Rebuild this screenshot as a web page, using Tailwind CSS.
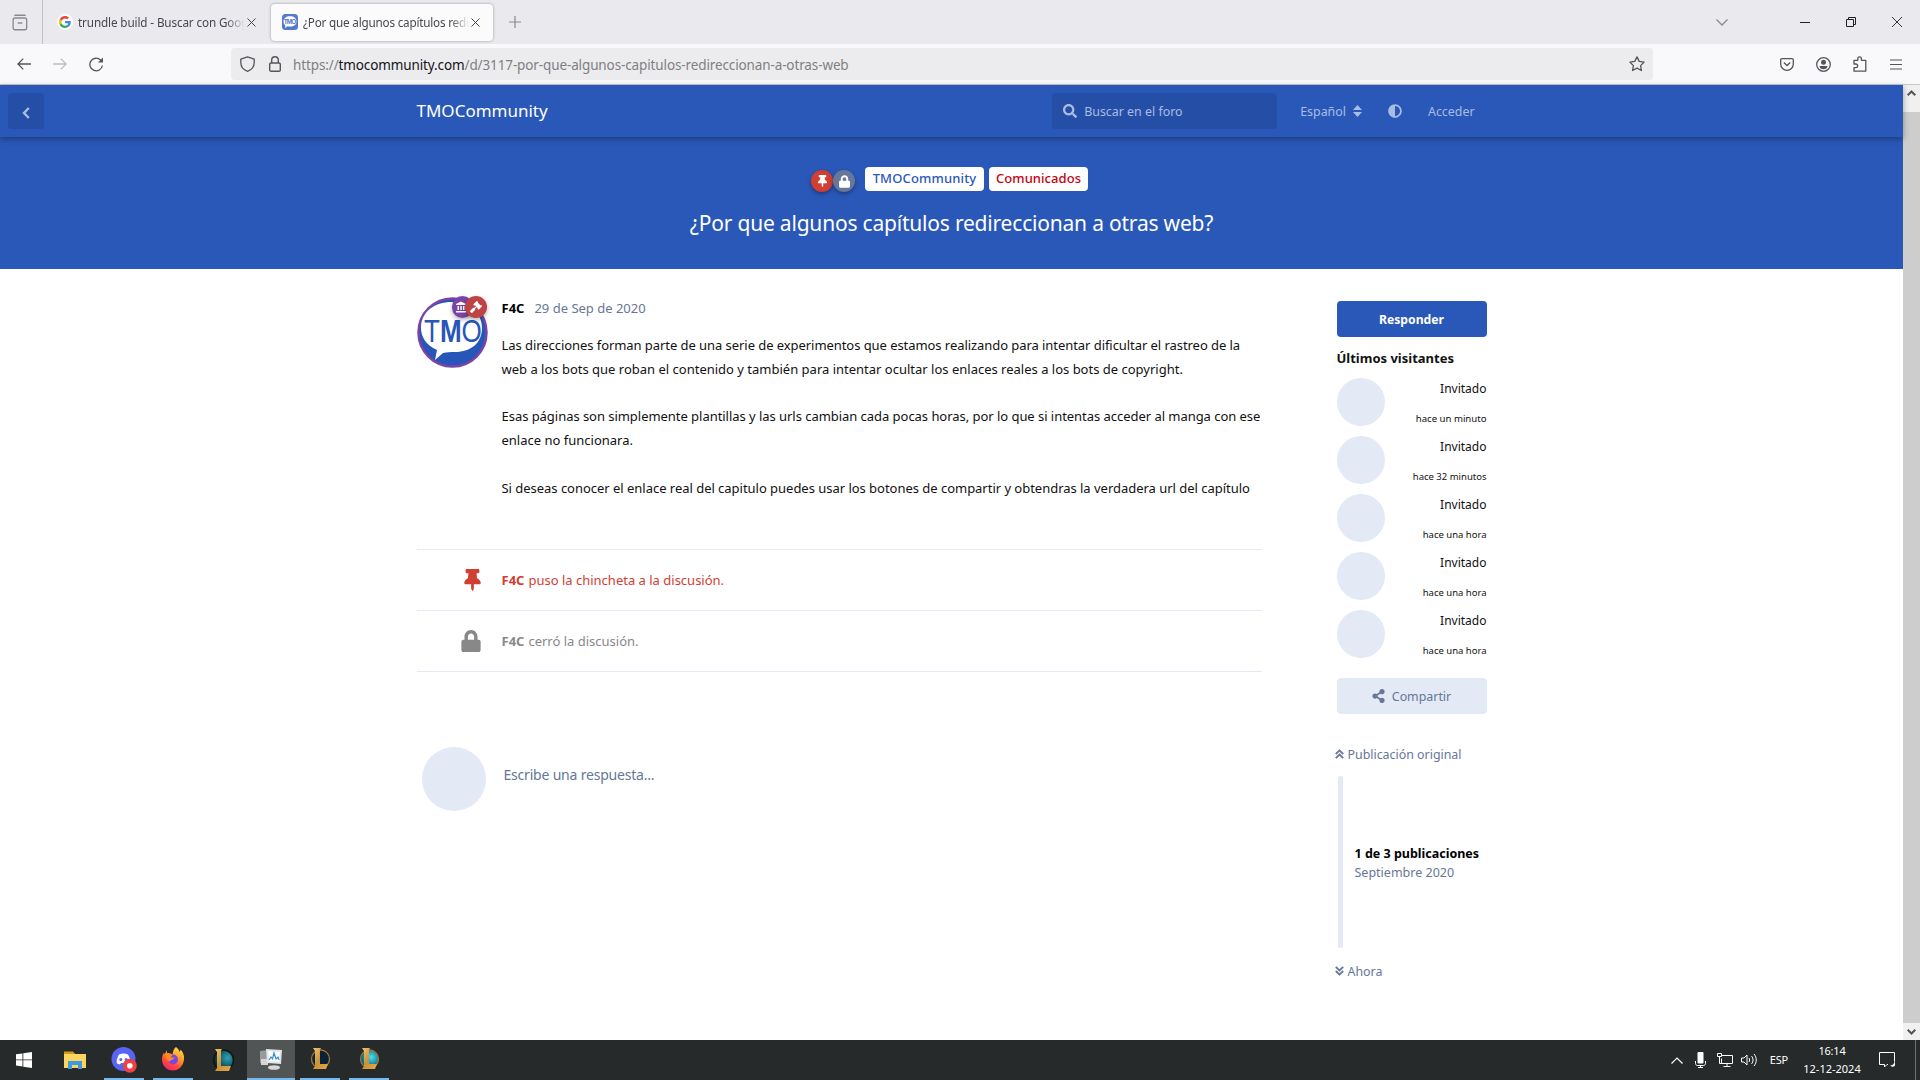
<!DOCTYPE html>
<html lang="es">
<head>
<meta charset="utf-8">
<title>¿Por que algunos capítulos redireccionan a otras web? - TMOCommunity</title>
<script src="https://cdn.jsdelivr.net/npm/@tailwindcss/browser@4"></script>
</head>
<body class="w-[1920px] h-[1080px] overflow-hidden bg-white font-['Noto_Sans',sans-serif] text-[13px] text-[#111] flex flex-col whitespace-nowrap">

<svg class="absolute w-0 h-0">
  <defs>
    <symbol id="pin" viewBox="0 0 384 512"><path fill="currentColor" d="M298.028 214.267L285.793 96H328c13.255 0 24-10.745 24-24V24c0-13.255-10.745-24-24-24H56C42.745 0 32 10.745 32 24v48c0 13.255 10.745 24 24 24h42.207L85.972 214.267C37.465 236.82 0 277.261 0 328c0 13.255 10.745 24 24 24h136v104.007c0 1.242.289 2.467.845 3.578l24 48c2.941 5.882 11.364 5.893 14.311 0l24-48a8.008 8.008 0 0 0 .845-3.578V352h136c13.255 0 24-10.745 24-24-.001-51.183-37.983-91.42-85.973-113.733z"/></symbol>
    <symbol id="lock" viewBox="0 0 448 512"><path fill="currentColor" d="M400 224h-24v-72C376 68.2 307.8 0 224 0S72 68.2 72 152v72H48c-26.5 0-48 21.5-48 48v192c0 26.5 21.5 48 48 48h352c26.5 0 48-21.5 48-48V272c0-26.5-21.5-48-48-48zm-104 0H152v-72c0-39.7 32.3-72 72-72s72 32.3 72 72v72z"/></symbol>
    <linearGradient id="gold" x1="0" y1="0" x2="1" y2="1"><stop offset="0" stop-color="#f3c56b"/><stop offset=".5" stop-color="#c8923b"/><stop offset="1" stop-color="#e9a945"/></linearGradient>
    <radialGradient id="teal" cx=".7" cy=".4" r=".7"><stop offset="0" stop-color="#2fa3b5"/><stop offset=".6" stop-color="#0e5a6b"/><stop offset="1" stop-color="#06202c"/></radialGradient>
    <radialGradient id="cyan" cx=".6" cy=".4" r=".7"><stop offset="0" stop-color="#4fe0ea"/><stop offset=".6" stop-color="#1583a8"/><stop offset="1" stop-color="#0a3a58"/></radialGradient>
    <linearGradient id="fox" x1=".8" y1="0" x2=".3" y2="1"><stop offset="0" stop-color="#ffe14a"/><stop offset=".45" stop-color="#ff9226"/><stop offset=".75" stop-color="#ff4440"/><stop offset="1" stop-color="#f0267a"/></linearGradient>
  </defs>
</svg>

<!-- Tab strip -->
<div class="h-[44px] shrink-0 bg-[#eae9ee] flex items-center text-[#48474f] text-[11.7px]">
  <div class="w-[43px] h-full border-r border-[#c0bfc6] flex items-center pl-[12px]">
    <svg class="w-[16px] h-[17px]" viewBox="0 0 17 17" preserveAspectRatio="none" fill="none" stroke="#8a898f" stroke-width="1.4"><path d="M3 1.2h11" stroke-linecap="round"/><rect x="1.2" y="4" width="14.4" height="11.8" rx="2"/><path d="M6 9h5"/></svg>
  </div>
  <div class="w-[228px] h-full flex items-center pl-[14px]">
    <div class="w-4 h-4 rounded-full bg-white flex items-center justify-center">
      <svg class="w-3 h-3" viewBox="0 0 48 48"><path fill="#ea4335" d="M24 9.5c3.5 0 6.700 1.200 9.200 3.600l6.900-6.900C35.900 2.400 30.500 0 24 0 14.600 0 6.500 5.400 2.600 13.200l8 6.200C12.400 13.700 17.700 9.500 24 9.500z"/><path fill="#4285f4" d="M47 24.500c0-1.600-.2-3.100-.4-4.500H24v9h12.900c-.6 3-2.200 5.500-4.700 7.200l7.700 6C44.400 38 47 31.800 47 24.500z"/><path fill="#fbbc05" d="M10.500 28.600a14.500 14.500 0 0 1 0-9.200l-8-6.200a24 24 0 0 0 0 21.600l8-6.200z"/><path fill="#34a853" d="M24 48c6.500 0 11.900-2.100 15.900-5.800l-7.700-6c-2.200 1.500-4.900 2.300-8.200 2.300-6.300 0-11.600-4.200-13.500-9.900l-8 6.200C6.500 42.600 14.600 48 24 48z"/></svg>
    </div>
    <div class="ml-[5px] mt-[2px] w-[168px] overflow-hidden tracking-[-0.12px] [mask-image:linear-gradient(to_right,#000_148px,transparent_167px)]">trundle build - Buscar con Google</div>
    <svg class="w-[9px] h-[9px] ml-[1px]" viewBox="0 0 9 9" stroke="#48474f" stroke-width="1"><path d="M.5.5l8 8M8.500.5l-8 8"/></svg>
  </div>
  <div class="w-[222px] h-[37px] rounded-[4px] bg-[#fbfbfb] shadow-[0_0_3px_rgba(0,0,0,0.35)] flex items-center pl-[11px]">
    <svg class="w-4 h-4" viewBox="0 0 16 16"><rect width="16" height="16" rx="3.500" fill="#5478cb"/><path d="M8 2.200c4 0 6.500 2 6.500 5.300S12 12.600 8 12.600c-1 0-1.700 0-2.500-.3L3 14l.4-2.600C2 10.400 1.500 9 1.500 7.500 1.500 4.200 4 2.200 8 2.200z" fill="#fff"/><text x="8" y="10" text-anchor="middle" textLength="12.500" font-size="6.500" font-weight="700" font-family="Liberation Sans" fill="#5478cb">TMO</text></svg>
    <div class="ml-[5px] mt-[2px] w-[167px] overflow-hidden tracking-[-0.2px] [mask-image:linear-gradient(to_right,#000_148px,transparent_166px)]">¿Por que algunos capítulos redireccionan</div>
    <svg class="w-[9px] h-[9px] ml-[1px]" viewBox="0 0 9 9" stroke="#48474f" stroke-width="1"><path d="M.5.5l8 8M8.500.5l-8 8"/></svg>
  </div>
  <svg class="w-3 h-3 ml-[16px]" viewBox="0 0 12 12" stroke="#8a898f" stroke-width="1.200"><path d="M6 0v12M0 6h12"/></svg>
  <div class="ml-auto flex items-center">
    <svg class="w-3 h-[7px] mr-[72px]" viewBox="0 0 12 7" fill="none" stroke="#8a898f" stroke-width="1.300"><path d="M.5.5L6 6 11.500.5"/></svg>
    <div class="w-[10px] h-px bg-[#222] mr-[36px]"></div>
    <svg class="w-[10px] h-[10px] mr-[36px]" viewBox="0 0 10 10" fill="none" stroke="#222"><path d="M.5 2.500h7v7h-7zM2.500 2.500v-2h7v7h-2"/></svg>
    <svg class="w-[10px] h-[10px] mr-[18px]" viewBox="0 0 10 10" stroke="#222" stroke-width=".9"><path d="M0 0l10 10M10 0L0 10"/></svg>
  </div>
</div>

<!-- Address bar -->
<div class="h-[41px] shrink-0 bg-[#f9f9fb] border-b border-[#c9c9cc] flex items-center text-[13.5px]">
  <svg class="w-[14px] h-3 ml-[17px]" viewBox="0 0 14 12" fill="none" stroke="#55545c" stroke-width="1.300"><path d="M14 6H1M6.300.6L.9 6l5.400 5.400"/></svg>
  <svg class="w-[14px] h-3 ml-[22px]" viewBox="0 0 14 12" fill="none" stroke="#bdbcc2" stroke-width="1.300"><path d="M0 6h13M7.700.6L13.100 6l-5.400 5.400"/></svg>
  <svg class="w-[15px] h-[15px] ml-[22px]" viewBox="0 0 15 15" fill="none" stroke="#55545c" stroke-width="1.300"><path d="M13.400 8.500A6.300 6.300 0 1 1 11.600 3L13 4.500"/><path d="M14 .5v5H9z" fill="#55545c" stroke="none"/></svg>
  <div class="ml-[127px] w-[1422px] h-8 rounded-[4px] bg-[#ececee] flex items-center pl-[9px] pr-[8px] text-[#7f7f84]">
    <svg class="w-[15px] h-4" viewBox="0 0 15 16" fill="none" stroke="#55545c" stroke-width="1.300"><path d="M7.500.8l6.700 2.300v3.400c0 4-2.300 7.200-6.700 8.800C3.100 13.700.8 10.500.8 6.500V3.100z" stroke-linejoin="round"/></svg>
    <svg class="w-3 h-4 ml-[14px]" viewBox="0 0 12 16" fill="none" stroke="#55545c" stroke-width="1.400"><rect x=".7" y="7" width="10.600" height="8.200" rx="1.300"/><path d="M2.700 7V4a3.300 3.300 0 0 1 6.600 0v3"/></svg>
    <div class="ml-[12px] mt-[2px] tracking-[-0.12px]">https://<span class="text-[#15141a]">tmocommunity.com</span>/d/3117-por-que-algunos-capitulos-redireccionan-a-otras-web</div>
    <svg class="w-4 h-4 ml-auto" viewBox="0 0 16 16" fill="none" stroke="#55545c" stroke-width="1.300" stroke-linejoin="round"><path d="M8 .9l2.200 4.500 4.900.7-3.500 3.500.8 4.900L8 12.200l-4.400 2.300.8-4.900L.9 6.100l4.900-.7z"/></svg>
  </div>
  <svg class="w-[14px] h-[13px] ml-auto" viewBox="0 0 14 13" fill="none" stroke="#55545c" stroke-width="1.300"><path d="M2 .7h10c.8 0 1.300.5 1.300 1.300v4a6.300 6.300 0 0 1-12.600 0V2C.7 1.200 1.200.7 2 .7z"/><path d="M3.800 4.500L7 7.500l3.200-3"/></svg>
  <svg class="w-[15px] h-[15px] ml-[22px]" viewBox="0 0 15 15"><circle cx="7.500" cy="7.500" r="6.800" fill="none" stroke="#55545c" stroke-width="1.300"/><circle cx="7.500" cy="5.300" r="2.500" fill="#55545c"/><path d="M3.500 9h8c0 2-1.800 3.300-4 3.300S3.500 11 3.500 9z" fill="#55545c"/></svg>
  <svg class="w-[14px] h-4 ml-[22px]" viewBox="0 0 14 16" fill="none" stroke="#55545c" stroke-width="1.300" stroke-linejoin="round"><path d="M1 5.500V4.300h3.800V2.600a1.800 1.800 0 0 1 3.600 0v1.700h4.400v10.900H1v-3.500h1.800a1.800 1.800 0 0 0 0-3.700H1z"/></svg>
  <svg class="w-3 h-[11px] ml-[23px] mr-[18px]" viewBox="0 0 12 11" stroke="#55545c" stroke-width="1.200"><path d="M0 1h12M0 5.500h12M0 10h12"/></svg>
</div>

<!-- Page -->
<div class="flex-1 min-h-0 flex">
  <div class="w-[1903px] flex flex-col">
    <header class="relative h-[52px] shrink-0 bg-[#2a58b9] shadow-[0_2px_6px_rgba(0,0,0,0.35)] flex items-center">
      <div class="absolute left-[8px] top-[8px] w-9 h-9 rounded-[4px] bg-[#254fa6] flex items-center justify-center">
        <svg class="w-[8px] h-3 mt-[3px]" viewBox="0 0 8 12" fill="none" stroke="#a9bce3" stroke-width="2.400"><path d="M6.800 1L2 6l4.800 5"/></svg>
      </div>
      <div class="w-[1100px] mx-auto px-[15px] flex items-center text-[#a9bce3]">
        <div class="text-[17px] text-white">TMOCommunity</div>
        <div class="ml-auto w-[225px] h-9 rounded-[4px] bg-[#254fa6] flex items-center pl-[11px]">
          <svg class="w-[14px] h-[14px]" viewBox="0 0 512 512"><path fill="currentColor" d="M505 442.700L405.300 343c-4.500-4.500-10.600-7-17-7H372c27.600-35.300 44-79.700 44-128C416 93.100 322.900 0 208 0S0 93.100 0 208s93.100 208 208 208c48.300 0 92.700-16.400 128-44v16.300c0 6.400 2.500 12.500 7 17l99.700 99.700c9.400 9.400 24.600 9.400 33.900 0l28.300-28.300c9.400-9.400 9.400-24.600.1-34zM208 336c-70.700 0-128-57.200-128-128 0-70.700 57.200-128 128-128 70.700 0 128 57.200 128 128 0 70.700-57.200 128-128 128z"/></svg>
          <span class="ml-[7px] mt-[2px] text-[12.4px]">Buscar en el foro</span>
        </div>
        <span class="ml-[23px] mt-[2px] text-[12.4px]">Español</span>
        <svg class="w-[9px] h-3 ml-[7px]" viewBox="0 0 9 12"><path fill="currentColor" d="M4.500 0L9 5H0zM0 7h9l-4.500 5z"/></svg>
        <svg class="w-[14px] h-[14px] ml-[26px]" viewBox="0 0 512 512"><path fill="currentColor" d="M8 256c0 136.966 111.033 248 248 248s248-111.034 248-248S392.966 8 256 8 8 119.033 8 256zm248 184V72c101.705 0 184 82.311 184 184 0 101.705-82.311 184-184 184z"/></svg>
        <span class="ml-[26px] mr-[12px] mt-[2px] text-[12.4px]">Acceder</span>
      </div>
    </header>

    <section class="h-[132px] shrink-0 bg-[#2a58b9] flex flex-col items-center pt-[30px]">
      <div class="flex items-center text-[13px] font-medium h-6 ml-[-4px]">
        <span class="w-[22px] h-[22px] mt-[4px] rounded-full bg-[#d13e32] text-white flex items-center justify-center shadow-[0_2px_4px_rgba(0,0,0,0.35)]"><svg class="w-[9px] h-3"><use href="#pin"/></svg></span>
        <span class="w-[22px] h-[22px] mt-[4px] rounded-full bg-[#667799] text-white flex items-center justify-center shadow-[0_2px_4px_rgba(0,0,0,0.35)]"><svg class="w-[11px] h-[13px]"><use href="#lock"/></svg></span>
        <span class="ml-[10px] h-6 w-[119px] rounded-[4px] bg-white text-[#2a58b9] flex items-center justify-center tracking-[0.15px]">TMOCommunity</span>
        <span class="ml-[5px] h-6 w-[99px] rounded-[4px] bg-white text-[#c70010] flex items-center justify-center tracking-[0.05px]">Comunicados</span>
      </div>
      <h1 class="mt-[16px] text-[21px] leading-[32px] text-white tracking-[-0.2px]">¿Por que algunos capítulos redireccionan a otras web?</h1>
    </section>

    <div class="w-[1100px] mx-auto px-[15px] flex justify-between">
      <main class="w-[845px]">
        <article class="relative h-[281px] pt-[28px] pl-[85px] border-b border-[#e3e9f5]">
          <div class="absolute left-0 top-[28px] w-[71px] h-[71px]">
            <svg class="w-[71px] h-[71px]" viewBox="0 0 71 71"><circle cx="35.500" cy="35.500" r="34" fill="#2756b8" stroke="#7943a8" stroke-width="2.500"/><path d="M35 5c18 0 30 11 30 26S54 55 38 55c-5 0-8 0-12 1l-8 7 2-10C9 48 4 40 4 31 4 15 17 5 35 5z" fill="#fff"/><g transform="translate(7 44.500) scale(.84 1)" font-family="Liberation Sans" font-size="31" fill="#2756b8"><text>T<tspan font-weight="700">M</tspan>O</text></g></svg>
            <span class="absolute left-[35px] top-[-1px] w-[21px] h-[22px] rounded-full bg-[#7943a8] shadow-[0_2px_4px_rgba(0,0,0,0.3)] flex items-center justify-center"><svg class="w-3 h-3 mr-[3px]" viewBox="0 0 12 12" fill="#fff"><path d="M6 .5l5 2.500v1H1V3zM2.500 5H4v4H2.500zM5.300 5h1.500v4H5.300zM8 5h1.500v4H8zM1 10h10v1.500H1z"/></svg></span>
            <span class="absolute left-[48px] top-[-1px] w-[22px] h-[22px] rounded-full bg-[#bf4342] shadow-[0_2px_4px_rgba(0,0,0,0.3)] flex items-center justify-center"><svg class="w-3 h-3" viewBox="0 0 512 512" fill="#fff"><path d="M504.971 199.362l-22.627-22.627c-9.373-9.373-24.569-9.373-33.941 0l-5.657 5.657L329.608 69.255l5.657-5.657c9.373-9.373 9.373-24.569 0-33.941L312.638 7.029c-9.373-9.373-24.569-9.373-33.941 0L154.246 131.480c-9.373 9.373-9.373 24.569 0 33.941l22.627 22.627c9.373 9.373 24.569 9.373 33.941 0l5.657-5.657 39.598 39.598-81.040 81.040-5.657-5.657c-12.497-12.497-32.758-12.497-45.255 0L9.373 412.118c-12.497 12.497-12.497 32.758 0 45.255l45.255 45.255c12.497 12.497 32.758 12.497 45.255 0l114.745-114.745c12.497-12.497 12.497-32.758 0-45.255l-5.657-5.657 81.040-81.040 39.598 39.598-5.657 5.657c-9.373 9.373-9.373 24.569 0 33.941l22.627 22.627c9.373 9.373 24.569 9.373 33.941 0l124.451-124.451c9.372-9.372 9.372-24.568 0-33.941z"/></svg></span>
          </div>
          <div class="flex items-center leading-[22px]"><b class="text-black">F4C</b><span class="ml-[10px] text-[#667799]">29 de Sep de 2020</span></div>
          <div class="mt-[15px] leading-[23.800px]">
            <p><span class="tracking-[-0.06px]">Las direcciones forman parte de una serie de experimentos que estamos realizando para intentar dificultar el rastreo de la</span><br>web a los bots que roban el contenido y también para intentar ocultar los enlaces reales a los bots de copyright.</p>
            <p class="mt-[23.800px]"><span class="tracking-[-0.04px]">Esas páginas son simplemente plantillas y las urls cambian cada pocas horas, por lo que si intentas acceder al manga con ese</span><br>enlace no funcionara.</p>
            <p class="mt-[23.800px] tracking-[-0.025px]">Si deseas conocer el enlace real del capitulo puedes usar los botones de compartir y obtendras la verdadera url del capítulo</p>
          </div>
        </article>
        <div class="h-[61px] border-b border-[#e3e9f5] flex items-center text-[#d13e32]">
          <span class="w-[64px] flex justify-end"><svg class="w-[17px] h-[22px]"><use href="#pin"/></svg></span>
          <b class="ml-[21px] mt-[2px]">F4C</b><span class="ml-[4px] mt-[2px]">puso la chincheta a la discusión.</span>
        </div>
        <div class="h-[61px] border-b border-[#e3e9f5] flex items-center text-[#888]">
          <span class="w-[64px] flex justify-end"><svg class="w-[20px] h-[22px]"><use href="#lock"/></svg></span>
          <b class="ml-[21px] mt-[2px]">F4C</b><span class="ml-[4px] mt-[2px]">cerró la discusión.</span>
        </div>
        <div class="mt-[75px] ml-[5px] flex">
          <div class="w-16 h-16 rounded-full bg-[#e3e9f5]"></div>
          <div class="ml-[18px] mt-[17px] text-[14px] text-[#667799] tracking-[-0.2px]">Escribe una respuesta...</div>
        </div>
      </main>

      <aside class="w-[150px] pt-[32px]">
        <div class="h-9 pt-[2px] rounded-[4px] bg-[#2a58b9] text-white font-bold text-[12.200px] flex items-center justify-center">Responder</div>
        <div class="mt-[11px] leading-[20px] font-bold text-[13px]">Últimos visitantes</div>
        <div class="mt-[10px] flex flex-col gap-[10px]">
          <div class="h-12 flex justify-between"><div class="w-12 h-12 rounded-full bg-[#e3e9f5]"></div><div class="text-right pt-px"><div class="leading-[20px] text-[12px]">Invitado</div><div class="mt-[12px] leading-[16px] text-[9.600px]">hace un minuto</div></div></div>
          <div class="h-12 flex justify-between"><div class="w-12 h-12 rounded-full bg-[#e3e9f5]"></div><div class="text-right pt-px"><div class="leading-[20px] text-[12px]">Invitado</div><div class="mt-[12px] leading-[16px] text-[9.500px]">hace 32 minutos</div></div></div>
          <div class="h-12 flex justify-between"><div class="w-12 h-12 rounded-full bg-[#e3e9f5]"></div><div class="text-right pt-px"><div class="leading-[20px] text-[12px]">Invitado</div><div class="mt-[12px] leading-[16px] text-[9.500px]">hace una hora</div></div></div>
          <div class="h-12 flex justify-between"><div class="w-12 h-12 rounded-full bg-[#e3e9f5]"></div><div class="text-right pt-px"><div class="leading-[20px] text-[12px]">Invitado</div><div class="mt-[12px] leading-[16px] text-[9.500px]">hace una hora</div></div></div>
          <div class="h-12 flex justify-between"><div class="w-12 h-12 rounded-full bg-[#e3e9f5]"></div><div class="text-right pt-px"><div class="leading-[20px] text-[12px]">Invitado</div><div class="mt-[12px] leading-[16px] text-[9.500px]">hace una hora</div></div></div>
        </div>
        <div class="mt-[20px] h-9 rounded-[4px] bg-[#e3e9f5] text-[#667799] text-[12.400px] flex items-center justify-center">
          <svg class="w-[13px] h-[14px]" viewBox="0 0 448 512"><path fill="currentColor" d="M352 320c-22.608 0-43.387 7.819-59.790 20.895l-102.486-64.054a96.551 96.551 0 0 0 0-41.683l102.486-64.054C308.613 184.181 329.392 192 352 192c53.019 0 96-42.981 96-96S405.019 0 352 0s-96 42.981-96 96c0 7.158.79 14.130 2.276 20.841L155.790 180.895C139.387 167.819 118.608 160 96 160c-53.019 0-96 42.981-96 96s42.981 96 96 96c22.608 0 43.387-7.819 59.790-20.895l102.486 64.054A96.301 96.301 0 0 0 256 416c0 53.019 42.981 96 96 96s96-42.981 96-96-42.981-96-96-96z"/></svg>
          <span class="ml-[7px] mt-[2px]">Compartir</span>
        </div>
        <div class="mt-[30px] ml-[-2px] h-5 flex items-center text-[12.400px] text-[#667799]">
          <svg class="w-[9px] h-[10px]" viewBox="0 0 9 10" fill="none" stroke="currentColor" stroke-width="1.800"><path d="M.8 5L4.500 1.400 8.200 5M.8 9.200l3.700-3.600 3.700 3.600"/></svg>
          <span class="ml-[4px] mt-[2px]">Publicación original</span>
        </div>
        <div class="mt-[12px] ml-px h-[172px] flex items-center">
          <div class="w-[5px] h-full rounded-full bg-[#e3e9f5]"></div>
          <div class="ml-[12px] mt-[2px] text-[12.500px] leading-[19px]"><b class="text-black">1 de 3 publicaciones</b><br><span class="text-[#667799]">Septiembre 2020</span></div>
        </div>
        <div class="mt-[13px] ml-[-2px] h-5 flex items-center text-[12.400px] text-[#667799]">
          <svg class="w-[9px] h-[10px]" viewBox="0 0 9 10" fill="none" stroke="currentColor" stroke-width="1.800"><path d="M.8 5l3.700 3.600L8.200 5M.8.8l3.700 3.600L8.200.8"/></svg>
          <span class="ml-[4px] mt-[2px]">Ahora</span>
        </div>
      </aside>
    </div>
  </div>

  <!-- Scrollbar -->
  <div class="w-[17px] bg-[#f0f0f0] flex flex-col items-center">
    <svg class="w-[9px] h-[6px] mt-[5px] shrink-0" viewBox="0 0 9 6" fill="none" stroke="#555" stroke-width="2"><path d="M.7 5.300L4.500 1.500l3.800 3.800"/></svg>
    <div class="w-full flex-1 mt-[16px] bg-[#cdcdcd]"></div>
    <svg class="w-[9px] h-[6px] mt-[6px] mb-[5px] shrink-0" viewBox="0 0 9 6" fill="none" stroke="#555" stroke-width="2"><path d="M.7.7l3.800 3.800L8.300.7"/></svg>
  </div>
</div>

<!-- Taskbar -->
<div class="h-[40px] shrink-0 bg-[#262a2b] flex items-stretch text-white text-[12px]">
  <div class="w-12 flex items-center justify-center"><svg class="w-4 h-4" viewBox="0 0 16 16" fill="#fff"><path d="M0 2.300l6.500-.9v6.100H0zM7.300 1.300L16 0v7.500H7.300zM0 8.300h6.500v6.200L0 13.600zM7.300 8.300H16V16l-8.700-1.300z"/></svg></div>
  <div class="w-[53px] flex items-center justify-center"><svg class="w-[22px] h-[19px]" viewBox="0 0 22 19"><path d="M0 1h9l2 2h11v14H0z" fill="#fcd462"/><path d="M0 .5h9l1.500 2.500H0z" fill="#d69a15"/><path d="M4 10h14v8h-4v-4H8v4H4z" fill="#3e9be0"/></svg></div>
  <div class="ml-[3px] w-10 border-b-2 border-[#76b9ed] flex items-center justify-center"><svg class="w-[26px] h-[26px] mt-[2px]" viewBox="0 0 26 26"><circle cx="12.500" cy="12" r="12" fill="#5865f2"/><path d="M8 7.500c3-1.300 6-1.300 9 0 1.500 2.500 2.500 5 2.300 8.500-1.300 1-2.300 1.300-3.300 1.600l-1-1.600H10l-1 1.600c-1-.3-2-.6-3.300-1.600C5.500 12.500 6.500 10 8 7.500z" fill="#fff"/><circle cx="9.800" cy="12.500" r="1.500" fill="#5865f2"/><circle cx="15.200" cy="12.500" r="1.500" fill="#5865f2"/><circle cx="18.800" cy="18.800" r="7" fill="#ed4245"/><circle cx="18.800" cy="18.800" r="2.800" fill="#fff"/></svg></div>
  <div class="ml-[9px] w-10 border-b-2 border-[#76b9ed] flex items-center justify-center"><svg class="w-6 h-6" viewBox="0 0 24 24"><path d="M15 0c2 1.500 3 3 3.500 5 .8-.8 1-2 1-2.500 2.500 2.500 4 6 3.500 10-.7 6.500-5.300 11-11 11C5.500 23.500 1 18.500 1 12.500c0-3 .8-5 2-7l.5 2L6 3v3c2 0 4 .5 5.500 1.500C12 4 13 1.500 15 0z" fill="url(#fox)"/><circle cx="12" cy="12.500" r="5" fill="#7a45e0"/><path d="M5 7c2.500-.7 5 0 6.500 1.500l-2 1.500c1 1 3 .5 4 .5-1 3-5 2-5 4.500-2.500-2-4-4.500-3.500-8z" fill="#ff8a1f"/></svg></div>
  <div class="ml-[5px] w-[49px] flex items-center justify-center"><svg class="w-6 h-6" viewBox="0 0 24 24"><circle cx="12.500" cy="12" r="10" fill="url(#teal)" stroke="#151512" stroke-width="1.500"/><path d="M4 1h7l-1 2v15h10l-2 5H4l2-3V4z" fill="url(#gold)"/></svg></div>
  <div class="w-12 bg-[#515556] border-b-2 border-[#76b9ed] flex items-center justify-center"><svg class="w-6 h-[22px]" viewBox="0 0 24 22"><path d="M1 3l8-1v14l-8-1z" fill="#9a9a9a"/><path d="M2 11h7v6H2z" fill="#d5d5d5"/><path d="M7 1l16 1-1 14-14-1z" fill="#e3e3e0"/><path d="M9 3l12 .7-.7 10.300L10 13.300z" fill="#f8fbfd"/><path d="M10 12l2-3 1.500 2L15 5l2 6 2-2 1 3" fill="none" stroke="#3492c8" stroke-width="1.200"/><ellipse cx="15" cy="19.500" rx="6" ry="2.300" fill="#d8d8d8"/></svg></div>
  <div class="ml-[5px] w-10 border-b-2 border-[#76b9ed] flex items-center justify-center"><svg class="w-6 h-6" viewBox="0 0 24 24"><circle cx="12.500" cy="12" r="9" fill="#0b2236" stroke="#a07a35" stroke-width="1.300"/><path d="M5 1h8l-1 2v14h8l-2 5H5l2-3V4z" fill="url(#gold)"/></svg></div>
  <div class="ml-[9px] w-10 border-b-2 border-[#76b9ed] flex items-center justify-center"><svg class="w-6 h-6" viewBox="0 0 24 24"><circle cx="12.500" cy="12" r="9" fill="url(#cyan)" stroke="#a07a35" stroke-width="1.300"/><path d="M5 1h8l-1 2v14h8l-2 5H5l2-3V4z" fill="url(#gold)"/></svg></div>
  <div class="ml-auto flex items-center">
    <svg class="w-3 h-[7px]" viewBox="0 0 12 7" fill="none" stroke="#fff" stroke-width="1.200"><path d="M.5 6.500L6 1l5.500 5.500"/></svg>
    <svg class="w-[11px] h-4 ml-[12px]" viewBox="0 0 11 16" fill="none" stroke="#fff"><rect x="2.500" y="0" width="6" height="11.500" rx="1" fill="#fff" stroke="none"/><path d="M.5 9v2.500c0 1 .8 2 2 2h6c1.200 0 2-1 2-2V9M5.500 13.500v2M3 15.500h5"/></svg>
    <svg class="w-4 h-[14px] ml-[11px]" viewBox="0 0 16 14" fill="none" stroke="#fff"><path d="M5 2.500h10.500v8H4.500V5.500M10 10.500v3M6.500 13.500h7M.5.5h4v3h-4zM2.500 3.500v7h2"/></svg>
    <svg class="w-[17px] h-[14px] ml-[8px]" viewBox="0 0 17 14" fill="none" stroke="#fff"><path d="M.5 5v4h2.500l3 3V2L3 5zM8 5c.8 1.200.8 2.800 0 4M10.500 3c2 2.500 2 5.500 0 8M13 1c3 3.500 3 8.500 0 12"/></svg>
    <span class="ml-[12px] text-[11px] tracking-[-0.2px]">ESP</span>
    <div class="ml-[15px] w-[58px] text-center text-[11px] leading-[18px]"><div class="tracking-[-0.2px]">16:14</div><div>12-12-2024</div></div>
    <svg class="w-4 h-4 ml-[18px]" viewBox="0 0 16 16" fill="none" stroke="#fff"><path d="M9 12.500H8L5.500 15v-2.500h-5V.5h15v9"/><path d="M15.500 9a3.200 3.200 0 1 1-4.500 4.500c3 0 4.500-2 4.500-4.500z" fill="#fff" stroke="none"/></svg>
    <div class="ml-[20px] mr-[4px] w-px h-10 bg-[#6f7273]"></div>
  </div>
</div>
</body>
</html>
